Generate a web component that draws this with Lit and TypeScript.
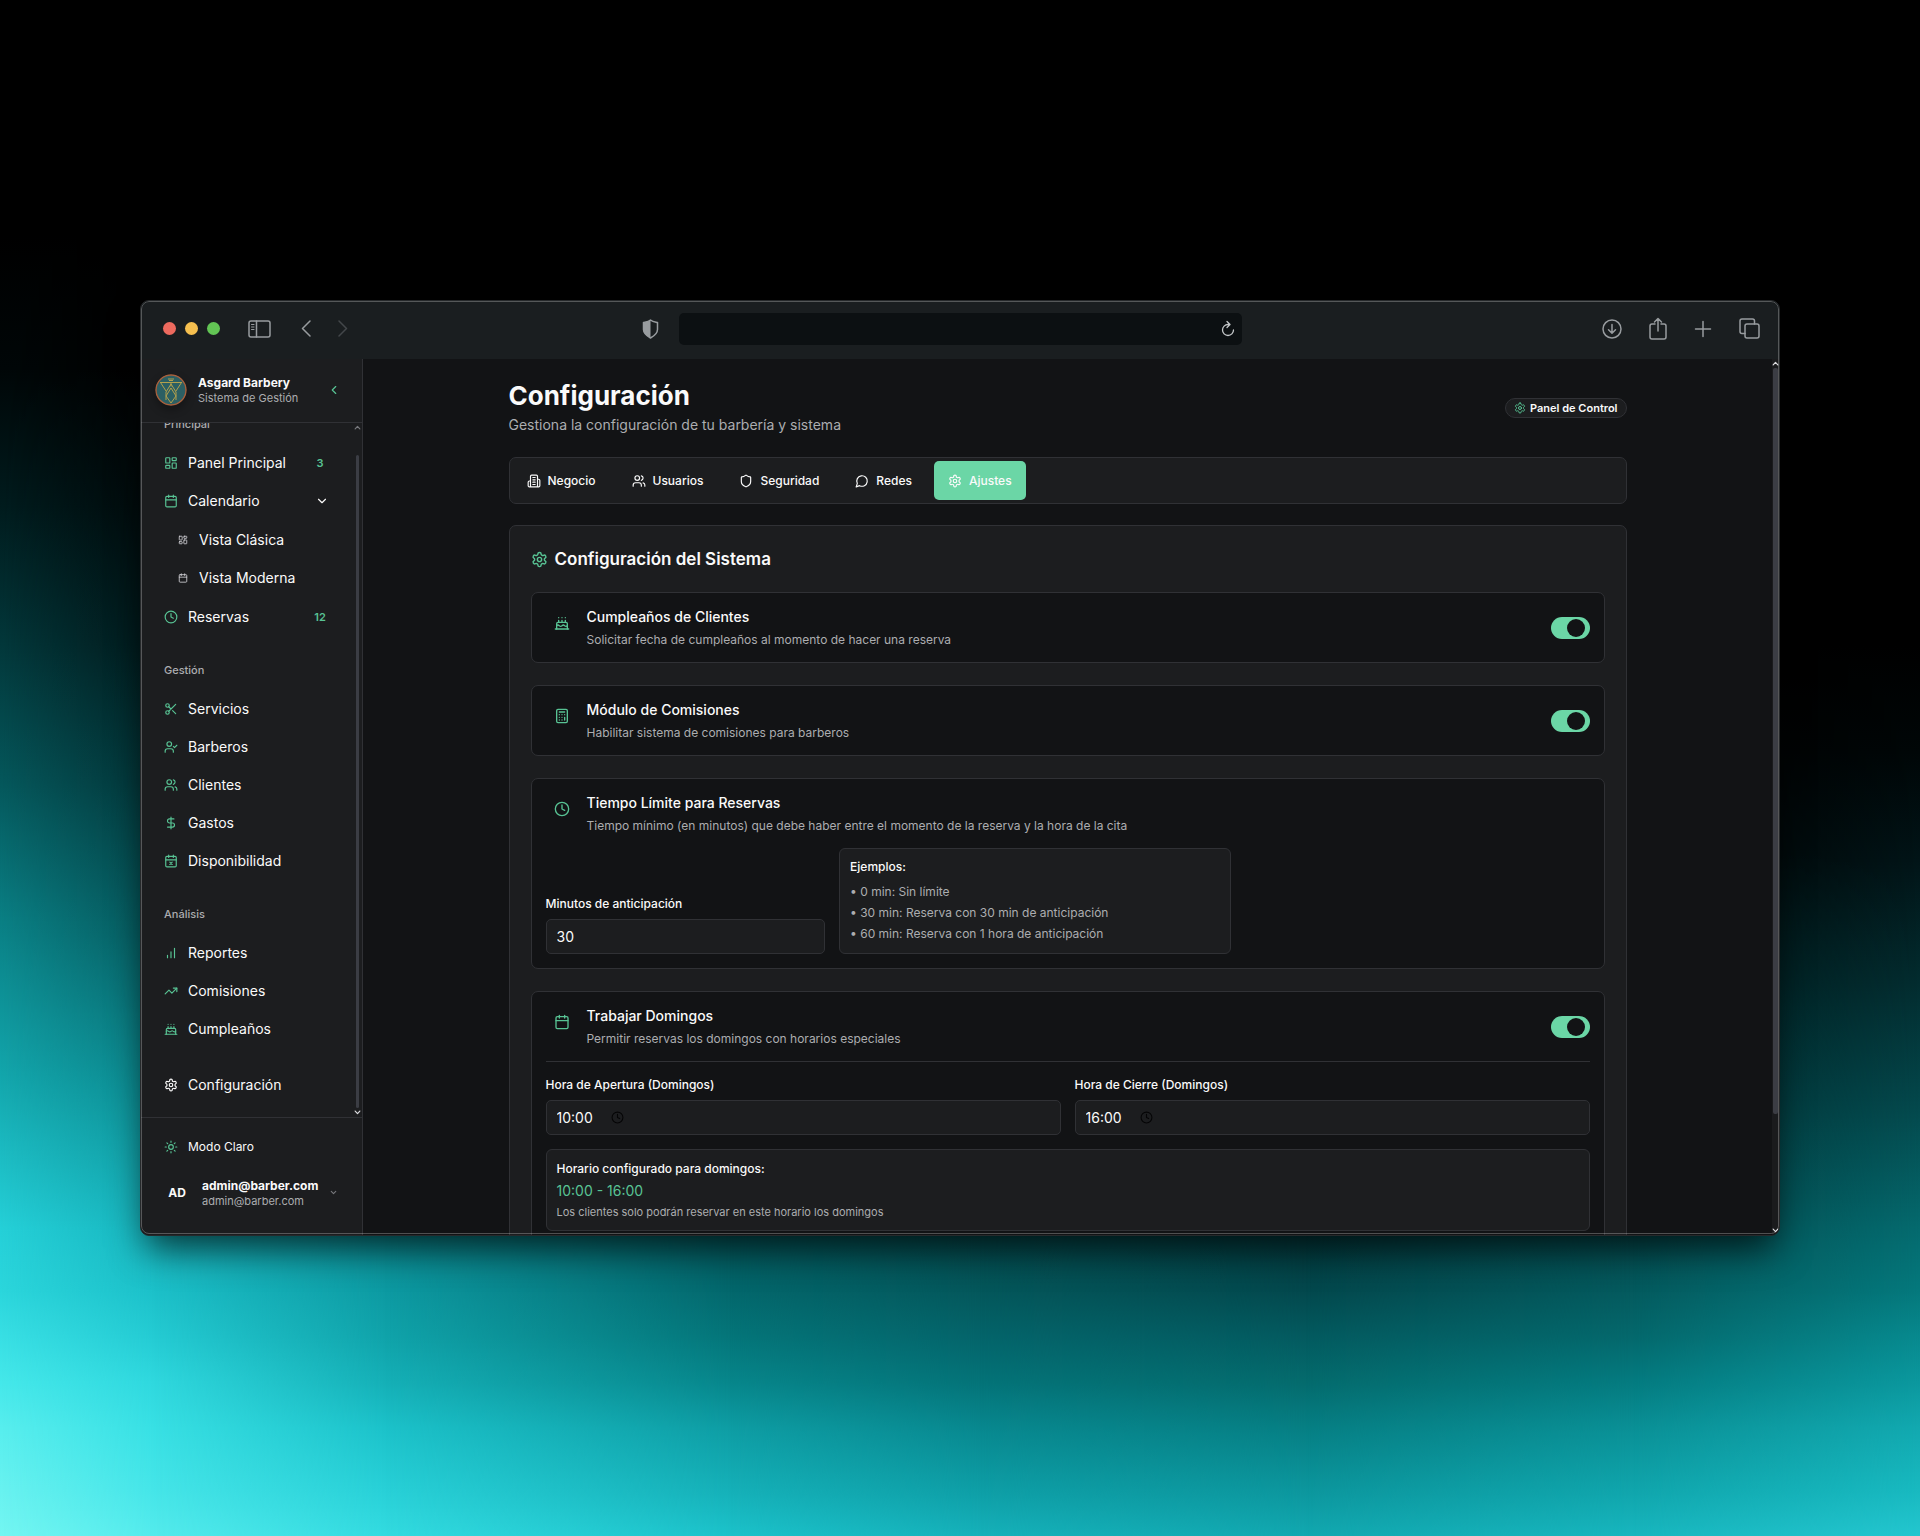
import { LitElement, html, css, svg, nothing } from "lit";
import type { TemplateResult } from "lit";
import { customElement, property, state } from "lit/decorators.js";
import { styleMap } from "lit/directives/style-map.js";
import { classMap } from "lit/directives/class-map.js";

const ICONS: Record<string, TemplateResult> = {
  dashboard: svg`<rect width="7" height="9" x="3" y="3" rx="1"/><rect width="7" height="5" x="14" y="3" rx="1"/><rect width="7" height="9" x="14" y="12" rx="1"/><rect width="7" height="5" x="3" y="16" rx="1"/>`,
  calendar: svg`<path d="M8 2v4M16 2v4"/><rect width="18" height="18" x="3" y="4" rx="2"/><path d="M3 10h18"/>`,
  calendarX: svg`<path d="M8 2v4M16 2v4"/><rect width="18" height="18" x="3" y="4" rx="2"/><path d="M3 10h18M14 14l-4 4M10 14l4 4"/>`,
  clock: svg`<circle cx="12" cy="12" r="10"/><path d="M12 6v6l4 2"/>`,
  scissors: svg`<circle cx="6" cy="6" r="3"/><path d="M8.12 8.12 12 12M20 4 8.12 15.88"/><circle cx="6" cy="18" r="3"/><path d="M14.8 14.8 20 20"/>`,
  userCheck: svg`<path d="M16 21v-2a4 4 0 0 0-4-4H6a4 4 0 0 0-4 4v2"/><circle cx="9" cy="7" r="4"/><path d="m16 11 2 2 4-4"/>`,
  users: svg`<path d="M16 21v-2a4 4 0 0 0-4-4H6a4 4 0 0 0-4 4v2"/><circle cx="9" cy="7" r="4"/><path d="M22 21v-2a4 4 0 0 0-3-3.87M16 3.13a4 4 0 0 1 0 7.75"/>`,
  dollar: svg`<path d="M12 2v20M17 5H9.5a3.5 3.5 0 0 0 0 7h5a3.5 3.5 0 0 1 0 7H6"/>`,
  bars: svg`<path d="M12 20V10M18 20V4M6 20v-4"/>`,
  trending: svg`<path d="m22 7-8.5 8.5-5-5L2 17"/><path d="M16 7h6v6"/>`,
  cake: svg`<path d="M20 21v-8a2 2 0 0 0-2-2H6a2 2 0 0 0-2 2v8"/><path d="M4 16s.5-1 2-1 2.500 2 4 2 2.500-2 4-2 2.500 2 4 2 2-1 2-1M2 21h20M7 8v3M12 8v3M17 8v3M7 4h.01M12 4h.01M17 4h.01"/>`,
  settings: svg`<path d="M12.220 2h-.44a2 2 0 0 0-2 2v.18a2 2 0 0 1-1 1.730l-.43.25a2 2 0 0 1-2 0l-.15-.08a2 2 0 0 0-2.730.73l-.22.38a2 2 0 0 0 .73 2.730l.15.1a2 2 0 0 1 1 1.720v.51a2 2 0 0 1-1 1.740l-.15.09a2 2 0 0 0-.73 2.730l.22.38a2 2 0 0 0 2.730.73l.15-.08a2 2 0 0 1 2 0l.43.25a2 2 0 0 1 1 1.730V20a2 2 0 0 0 2 2h.44a2 2 0 0 0 2-2v-.18a2 2 0 0 1 1-1.730l.43-.25a2 2 0 0 1 2 0l.15.08a2 2 0 0 0 2.730-.73l.22-.39a2 2 0 0 0-.73-2.730l-.15-.08a2 2 0 0 1-1-1.740v-.5a2 2 0 0 1 1-1.740l.15-.09a2 2 0 0 0 .73-2.730l-.22-.38a2 2 0 0 0-2.730-.73l-.15.08a2 2 0 0 1-2 0l-.43-.25a2 2 0 0 1-1-1.730V4a2 2 0 0 0-2-2z"/><circle cx="12" cy="12" r="3"/>`,
  sun: svg`<circle cx="12" cy="12" r="4"/><path d="M12 2v2M12 20v2M4.930 4.930l1.410 1.410M17.660 17.660l1.410 1.410M2 12h2M20 12h2M6.340 17.660l-1.410 1.410M19.070 4.930l-1.410 1.410"/>`,
  building: svg`<path d="M6 22V4a2 2 0 0 1 2-2h8a2 2 0 0 1 2 2v18ZM6 12H4a2 2 0 0 0-2 2v6a2 2 0 0 0 2 2h2M18 9h2a2 2 0 0 1 2 2v9a2 2 0 0 1-2 2h-2M10 6h4M10 10h4M10 14h4M10 18h4"/>`,
  shield: svg`<path d="M20 13c0 5-3.500 7.500-7.660 8.950a1 1 0 0 1-.67-.01C7.500 20.500 4 18 4 13V6a1 1 0 0 1 1-1c2 0 4.500-1.200 6.240-2.720a1.170 1.170 0 0 1 1.520 0C14.510 3.810 17 5 19 5a1 1 0 0 1 1 1z"/>`,
  message: svg`<path d="M7.900 20A9 9 0 1 0 4 16.100L2 22Z"/>`,
  calculator: svg`<rect width="16" height="20" x="4" y="2" rx="2"/><path d="M8 6h8M16 14v4M16 10h.01M12 10h.01M8 10h.01M12 14h.01M8 14h.01M12 18h.01M8 18h.01"/>`,
  chevronLeft: svg`<path d="m15 18-6-6 6-6"/>`,
  chevronDown: svg`<path d="m6 9 6 6 6-6"/>`,
  caretUp: svg`<path d="m4 17 8-9 8 9"/>`,
  caretDown: svg`<path d="m4 7 8 9 8-9"/>`,
};

@customElement("ui-icon")
class UiIcon extends LitElement {
  @property() name = "";
  static styles = css`
    :host { display: block; flex: none; width: 14px; height: 14px; }
    svg {
      display: block; width: 100%; height: 100%; fill: none;
      stroke: currentColor; stroke-width: var(--stroke, 2); stroke-linecap: round; stroke-linejoin: round;
    }
  `;
  render() {
    return html`<svg viewBox="0 0 24 24" aria-hidden="true">${ICONS[this.name]}</svg>`;
  }
}

/* Vertical colour ramps; each one fades into the next from left to right. */
const RAMPS: { from: number; to: number; stops: string }[] = [
  { from: -1, to: 0, stops: "#000 14%, #000708 24%, #011c1e 33%, #03383b 42%, #05585c 51%, #0a8085 60%, #13a6ac 70%, #25d0d8 80%, #2bd6dc 84%, #38dfe4 87%, #45e8ea 90%, #58eeee 93%, #68f2f0 97%, #74f6f2 100%" },
  { from: 0, to: 8, stops: "#000 24%, #000a0b 33%, #01191b 42%, #033538 51%, #065c60 61%, #0c8c92 71%, #17b4bd 80%, #1cc0c9 84%, #24cbd3 87%, #2fd8de 90%, #38e0e4 93%, #45e5e8 97%, #54ebec 100%" },
  { from: 8, to: 20, stops: "#000 42%, #022c2f 61%, #088087 78%, #0d9aa2 84%, #10a3aa 87%, #15b0b7 90%, #1cc2ca 93%, #28d0d7 97%, #33dbe0 100%" },
  { from: 20, to: 38, stops: "#000 55%, #034d51 78%, #03676c 84%, #047579 87%, #07868b 90%, #0e9da4 93%, #15b0b8 97%, #1cc2ca 100%" },
  { from: 38, to: 51, stops: "#000 58%, #033e41 78%, #04575b 84%, #04646a 87%, #047378 90%, #08888f 93%, #0e9ea6 97%, #16b1ba 100%" },
  { from: 51, to: 68, stops: "#000 60%, #022f32 78%, #03484d 84%, #035a5f 87%, #046b6d 90%, #067f84 93%, #0c969d 97%, #12a8b0 100%" },
  { from: 68, to: 85, stops: "#000 55%, #011f21 66%, #034044 78%, #045a5e 84%, #04686c 87%, #047b80 90%, #0a9096 93%, #10a5ac 97%, #18b6be 100%" },
  { from: 85, to: 100, stops: "#000 42%, #000607 49%, #011417 56%, #022c2f 64%, #03484c 72%, #046a6e 80%, #04787c 84%, #07898e 87%, #0b989e 90%, #12a9b0 93%, #18b9c0 97%, #24c6cf 100%" },
];

@customElement("glow-backdrop")
class GlowBackdrop extends LitElement {
  static styles = css`
    :host { position: absolute; inset: 0; background: #000; }
    .ramp { position: absolute; inset: 0; }
  `;
  render() {
    return RAMPS.map(({ from, to, stops }) => {
      const mask = from < 0 ? "none" : `linear-gradient(to right, transparent ${from}%, #000 ${to}%)`;
      return html`<div class="ramp" style=${styleMap({
        background: `linear-gradient(to bottom, ${stops})`,
        "mask-image": mask,
      })}></div>`;
    });
  }
}

@customElement("browser-bar")
class BrowserBar extends LitElement {
  static styles = css`
    :host {
      display: grid; grid-template-columns: 1fr minmax(0, 563px) 1fr; align-items: center;
      height: 58px; box-sizing: border-box; padding-bottom: 3px; background: #1a1e20; color: #989c9f; flex: none;
    }
    button { appearance: none; border: 0; background: none; padding: 0; color: inherit; display: block; }
    svg { display: block; fill: none; stroke: currentColor; stroke-width: 1.5; stroke-linecap: round; stroke-linejoin: round; }
    .side { display: flex; align-items: center; }
    .left { padding: 0 20px 0 22px; }
    .lights { display: flex; gap: 9px; margin-right: 28px; }
    .light { width: 13px; height: 13px; border-radius: 50%; }
    .close { background: #ed6a5e; }
    .min { background: #f5bf4f; }
    .max { background: #62c554; }
    .back { margin-left: 30px; }
    .forward { margin-left: 27px; color: #43474a; }
    .privacy { margin-left: auto; }
    .address { display: flex; align-items: center; height: 32px; border-radius: 5px; background: #0c1012; padding-right: 7px; color: #c4c7c9; }
    .address input { flex: 1; min-width: 0; border: 0; outline: 0; background: none; color: inherit; font: 13px Inter, sans-serif; }
    .right { justify-content: flex-end; gap: 27px; padding-right: 19px; }
  `;
  render() {
    return html`
      <div class="side left">
        <div class="lights">
          <button class="light close" aria-label="Cerrar"></button>
          <button class="light min" aria-label="Minimizar"></button>
          <button class="light max" aria-label="Maximizar"></button>
        </div>
        <button aria-label="Barra lateral">
          <svg width="23" height="18" viewBox="0 0 23 18"><rect x="1" y="1" width="21" height="16" rx="2"/><path d="M8.500 1v16"/><path stroke-width="1" d="M3.500 4.500h2.500M3.500 7h2.500M3.500 9.500h2.500"/></svg>
        </button>
        <button class="back" aria-label="Atrás">
          <svg width="10" height="17" viewBox="0 0 10 17"><path d="M9 1 1.500 8.500 9 16"/></svg>
        </button>
        <button class="forward" aria-label="Adelante">
          <svg width="10" height="17" viewBox="0 0 10 17"><path d="M1 1l7.500 7.500L1 16"/></svg>
        </button>
        <button class="privacy" aria-label="Privacidad">
          <svg width="17" height="20" viewBox="0 0 17 20"><path d="M8.500 1C6 3 3.500 3 1.500 3.500v7c0 4 3.500 6.500 7 8.500 3.500-2 7-4.500 7-8.500v-7C13.500 3 11 3 8.500 1z"/><path fill="currentColor" stroke="none" d="M8.500 1C6 3 3.500 3 1.500 3.500v7c0 4 3.500 6.500 7 8.500z"/></svg>
        </button>
      </div>
      <div class="address">
        <input type="text" aria-label="Dirección" />
        <button aria-label="Recargar">
          <svg width="14" height="17" viewBox="0 0 14 17"><path stroke-width="1.300" d="M12.500 10A5.500 5.500 0 1 1 7 4.500h1.500M6 1.500l3 3-3 3"/></svg>
        </button>
      </div>
      <div class="side right">
        <button aria-label="Descargas">
          <svg width="20" height="20" viewBox="0 0 20 20"><circle cx="10" cy="10" r="9"/><path d="M10 5.500v8.500M6.500 10.800 10 14.200l3.500-3.400"/></svg>
        </button>
        <button aria-label="Compartir">
          <svg width="18" height="23" viewBox="0 0 18 23"><path d="M6 7H3Q1 7 1 9v11q0 2 2 2h12q2 0 2-2V9q0-2-2-2h-3M9 14V1.500M5.500 5 9 1.500 12.500 5"/></svg>
        </button>
        <button aria-label="Nueva pestaña">
          <svg width="18" height="18" viewBox="0 0 18 18"><path d="M9 1.500v15M1.500 9h15"/></svg>
        </button>
        <button aria-label="Pestañas">
          <svg width="21" height="21" viewBox="0 0 21 21"><rect x="6" y="6" width="14" height="14" rx="2"/><path d="M15.500 6V3q0-2-2-2H3Q1 1 1 3v10.500q0 2 2 2h3"/></svg>
        </button>
      </div>
    `;
  }
}

interface NavItem { label: string; icon: string; badge?: string; open?: boolean; children?: NavItem[]; plain?: boolean; }
interface NavGroup { title?: string; items: NavItem[]; }

const NAV: NavGroup[] = [
  {
    title: "Principal",
    items: [
      { label: "Panel Principal", icon: "dashboard", badge: "3" },
      {
        label: "Calendario", icon: "calendar", open: true,
        children: [
          { label: "Vista Clásica", icon: "dashboard" },
          { label: "Vista Moderna", icon: "calendar" },
        ],
      },
      { label: "Reservas", icon: "clock", badge: "12" },
    ],
  },
  {
    title: "Gestión",
    items: [
      { label: "Servicios", icon: "scissors" },
      { label: "Barberos", icon: "userCheck" },
      { label: "Clientes", icon: "users" },
      { label: "Gastos", icon: "dollar" },
      { label: "Disponibilidad", icon: "calendarX" },
    ],
  },
  {
    title: "Análisis",
    items: [
      { label: "Reportes", icon: "bars" },
      { label: "Comisiones", icon: "trending" },
      { label: "Cumpleaños", icon: "cake" },
    ],
  },
  { items: [{ label: "Configuración", icon: "settings", plain: true }] },
];

@customElement("side-bar")
class SideBar extends LitElement {
  static styles = css`
    :host {
      display: flex; flex-direction: column; flex: none; width: 222px; box-sizing: border-box;
      background: #1c1d1f; border-right: 1px solid #303135; color: #fafafa;
    }
    ul { list-style: none; margin: 0; padding: 0; }
    a { color: inherit; text-decoration: none; }
    button { appearance: none; border: 0; background: none; padding: 0; color: inherit; font: inherit; text-align: left; }
    .brand {
      display: flex; align-items: center; gap: 11px; height: 64px; padding: 0 21px 1px 14px; box-sizing: border-box;
      border-bottom: 1px solid #303135; flex: none;
    }
    .logo { width: 32px; height: 32px; border-radius: 50%; box-shadow: 0 4px 8px rgba(0, 0, 0, 0.3); }
    .who { flex: 1; min-width: 0; }
    .name { font-size: 12px; font-weight: 700; line-height: 16px; }
    .sub { font-size: 11px; line-height: 14px; color: #acadb0; }
    .collapse { color: #58c394; }
    .body { flex: 1; min-height: 0; display: flex; }
    nav { flex: 1; min-width: 0; overflow-y: auto; scrollbar-width: none; padding: 12px 0 13px; display: flex; flex-direction: column; gap: 24px; box-sizing: border-box; }
    .group:last-child { margin-top: -6px; }
    .title { margin: 0 0 10px; padding-left: 23px; font-size: 11px; line-height: 20px; font-weight: 500; color: #acadb0; }
    .item { display: flex; align-items: center; width: 100%; height: 38px; box-sizing: border-box; padding: 0 24px 0 23px; gap: 10px; font-size: 14px; line-height: 20px; }
    .item ui-icon { color: #58c394; }
    .item.plain ui-icon { color: #fafafa; }
    .label { flex: 1; }
    .badge { width: 18px; text-align: center; font-size: 11px; font-weight: 600; color: #58c394; }
    .item .caret { color: #fafafa; }
    .children { padding: 1px 0; }
    .children .item { padding-left: 37px; gap: 11px; }
    .children .item ui-icon { width: 10px; height: 10px; color: #d4d4d8; }
    .rail { width: 9px; display: flex; flex-direction: column; align-items: center; flex: none; color: #dcdcdf; --stroke: 4; }
    .rail ui-icon { width: 7px; height: 9px; }
    .rail .dim { color: #77787c; }
    .thumb { width: 3px; border-radius: 2px; background: #3b3d44; flex: 1; margin-top: 23px; }
    .foot { border-top: 1px solid #303135; padding: 10px 0; flex: none; height: 118px; box-sizing: border-box; }
    .foot .item { font-size: 12px; }
    .account { display: flex; align-items: center; width: 100%; height: 53px; padding: 0 24px 0 22px; }
    .initials { width: 28px; text-align: center; font-size: 12px; font-weight: 700; margin-right: 11px; }
    .mail { flex: 1; }
    .account ui-icon { width: 9px; height: 9px; color: #77787c; --stroke: 3; }
  `;
  firstUpdated() {
    const nav = this.renderRoot.querySelector("nav")!;
    nav.scrollTop = nav.scrollHeight;
  }
  private item(i: NavItem): TemplateResult {
    const cls = classMap({ item: true, plain: !!i.plain });
    if (i.children) {
      return html`<li>
        <button class=${cls} aria-expanded=${String(!!i.open)}>
          <ui-icon name=${i.icon}></ui-icon><span class="label">${i.label}</span><ui-icon class="caret" name="chevronDown"></ui-icon>
        </button>
        <ul class="children">${i.children.map((c) => this.item(c))}</ul>
      </li>`;
    }
    return html`<li><a class=${cls} href="#"><ui-icon name=${i.icon}></ui-icon><span class="label">${i.label}</span>${i.badge ? html`<span class="badge">${i.badge}</span>` : nothing}</a></li>`;
  }
  render() {
    return html`
      <header class="brand">
        <svg class="logo" viewBox="0 0 32 32" aria-hidden="true">
          <circle cx="16" cy="16" r="15" fill="#2c5f63" stroke="#a9603c" stroke-width="1.400"/>
          <g fill="none" stroke="#b3a04c" stroke-width="1" stroke-linejoin="round">
            <path d="M5 8.500h22M13 5h6M14 6.500h4M16 8.500v4M5.500 8.500 11 17M26.500 8.500 21 17M16 10l-5 8v8M16 10l5 8v8M16 14l-5 8 5 7 5-7-5-8"/>
          </g>
        </svg>
        <div class="who"><div class="name">Asgard Barbery</div><div class="sub">Sistema de Gestión</div></div>
        <button class="collapse" aria-label="Contraer menú"><ui-icon name="chevronLeft"></ui-icon></button>
      </header>
      <div class="body">
        <nav>
          ${NAV.map((g) => html`<section class="group">
            ${g.title ? html`<h2 class="title">${g.title}</h2>` : nothing}
            <ul>${g.items.map((i) => this.item(i))}</ul>
          </section>`)}
        </nav>
        <div class="rail" aria-hidden="true">
          <ui-icon class="dim" name="caretUp"></ui-icon><div class="thumb"></div><ui-icon name="caretDown"></ui-icon>
        </div>
      </div>
      <footer class="foot">
        <button class="item"><ui-icon name="sun"></ui-icon><span class="label">Modo Claro</span></button>
        <button class="account">
          <span class="initials">AD</span>
          <span class="mail"><div class="name">admin@barber.com</div><div class="sub">admin@barber.com</div></span>
          <ui-icon name="chevronDown"></ui-icon>
        </button>
      </footer>
    `;
  }
}

const TABS = [
  { label: "Negocio", icon: "building" },
  { label: "Usuarios", icon: "users" },
  { label: "Seguridad", icon: "shield" },
  { label: "Redes", icon: "message" },
  { label: "Ajustes", icon: "settings" },
];

@customElement("settings-page")
class SettingsPage extends LitElement {
  @state() private active = "Ajustes";
  static styles = css`
    :host { display: flex; flex: 1; min-width: 0; background: #121315; color: #fafafa; }
    h1, h2, h3, p, ul { margin: 0; padding: 0; }
    ul { list-style: none; }
    .scroll { flex: 1; min-width: 0; overflow-y: auto; scrollbar-width: none; }
    .page { max-width: 1118px; margin: 0 auto; padding: 20px 0; }
    .head { display: flex; align-items: center; justify-content: space-between; margin-bottom: 21px; }
    h1 { font-size: 26px; line-height: 33px; font-weight: 700; }
    .lead { margin-top: 2px; font-size: 14px; line-height: 22px; color: #acadb0; }
    .pill { display: flex; align-items: center; gap: 4px; height: 20px; box-sizing: border-box; padding: 0 8px; border: 1px solid #303135; border-radius: 10px; background: #1c1d1f; font-size: 11px; font-weight: 600; }
    .pill ui-icon { width: 12px; height: 12px; }
    ui-icon { color: #58c394; }
    .tabs { display: flex; gap: 8px; padding: 3px; border: 1px solid #303135; border-radius: 7px; background: #1c1d1f; margin-bottom: 21px; }
    .tab { appearance: none; border: 0; background: none; color: inherit; font: 500 12px/18px Inter, sans-serif; display: flex; align-items: center; gap: 7px; height: 39px; padding: 0 14px; border-radius: 5px; }
    .tab ui-icon { color: inherit; }
    .tab.on { background: #6bd6a6; }
    .panel { border: 1px solid #303135; border-radius: 7px; background: #1c1d1f; padding: 22px 21px; display: grid; gap: 22px; }
    h2 { display: flex; align-items: center; gap: 7px; font-size: 17px; line-height: 22px; font-weight: 600; }
    h2 ui-icon { width: 17px; height: 17px; }
    .card { border: 1px solid #303135; border-radius: 7px; background: #121315; padding: 14px; display: grid; gap: 14px; }
    .row { display: flex; align-items: center; gap: 9px; }
    .mark { width: 32px; height: 32px; display: grid; place-items: center; align-self: flex-start; }
    .mark ui-icon { width: 16px; height: 16px; }
    .text { flex: 1; }
    h3 { font-size: 14px; line-height: 20px; font-weight: 500; }
    .desc { margin-top: 4px; font-size: 12px; line-height: 17px; color: #acadb0; }
    .switch { appearance: none; margin: 0; width: 39px; height: 22px; border-radius: 11px; background: #3b3d44; display: flex; align-items: center; padding: 0 5px 0 2px; box-sizing: border-box; }
    .switch::before { content: ""; width: 18px; height: 18px; border-radius: 50%; background: #121315; }
    .switch:checked { background: #6bd6a6; justify-content: flex-end; }
    .split { display: grid; grid-template-columns: 5fr 7fr; gap: 14px; max-width: 685px; align-items: end; }
    .pair { display: grid; grid-template-columns: 1fr 1fr; gap: 14px; border-top: 1px solid #303135; padding-top: 14px; }
    .field { display: grid; gap: 6px; }
    label, .strong { font-size: 12px; line-height: 18px; font-weight: 500; }
    .box { display: flex; align-items: center; height: 35px; box-sizing: border-box; border: 1px solid #303135; border-radius: 5px; background: #1c1d1f; padding: 0 10px; gap: 15px; }
    .box input { appearance: none; width: 100%; border: 0; outline: 0; padding: 0; background: none; color: inherit; font: 14px/20px Inter, sans-serif; }
    .box .time { width: 39px; }
    .box ui-icon { width: 13px; height: 13px; color: #050506; }
    .note { border: 1px solid #303135; border-radius: 6px; background: #1c1d1f; padding: 9px 10px; }
    .note ul { margin-top: 5px; font-size: 12px; line-height: 21px; color: #acadb0; }
    .note.hours { padding: 10px; display: grid; gap: 3px; }
    .range { font-size: 14px; line-height: 20px; color: #58c394; }
    .small { font-size: 11px; line-height: 16px; color: #acadb0; }
    .rail { width: 7px; flex: none; display: flex; flex-direction: column; align-items: center; background: #1a1b1d; color: #dcdcdf; --stroke: 4; }
    .rail ui-icon { width: 7px; height: 9px; color: inherit; }
    .thumb { width: 5px; flex: 745; background: #3b3d44; border-radius: 2px; }
    .rest { flex: 112; }
  `;
  private intro(id: string, icon: string, title: string, desc: string, toggle = true) {
    return html`<div class="row">
      <div class="mark"><ui-icon name=${icon}></ui-icon></div>
      <div class="text"><h3 id=${id}>${title}</h3><p class="desc">${desc}</p></div>
      ${toggle ? html`<input class="switch" type="checkbox" role="switch" aria-labelledby=${id} checked />` : nothing}
    </div>`;
  }
  render() {
    return html`
      <div class="scroll"><main class="page">
        <header class="head">
          <div><h1>Configuración</h1><p class="lead">Gestiona la configuración de tu barbería y sistema</p></div>
          <div class="pill"><ui-icon name="settings"></ui-icon>Panel de Control</div>
        </header>
        <div class="tabs" role="tablist">
          ${TABS.map((t) => html`<button role="tab" aria-selected=${String(t.label === this.active)}
            class=${classMap({ tab: true, on: t.label === this.active })} @click=${() => (this.active = t.label)}>
            <ui-icon name=${t.icon}></ui-icon>${t.label}</button>`)}
        </div>
        <section class="panel">
          <h2><ui-icon name="settings"></ui-icon>Configuración del Sistema</h2>
          <div class="card">${this.intro("cumple", "cake", "Cumpleaños de Clientes", "Solicitar fecha de cumpleaños al momento de hacer una reserva")}</div>
          <div class="card">${this.intro("comis", "calculator", "Módulo de Comisiones", "Habilitar sistema de comisiones para barberos")}</div>
          <div class="card">
            ${this.intro("limite", "clock", "Tiempo Límite para Reservas", "Tiempo mínimo (en minutos) que debe haber entre el momento de la reserva y la hora de la cita", false)}
            <div class="split">
              <div class="field"><label for="minutos">Minutos de anticipación</label><div class="box"><input id="minutos" type="text" inputmode="numeric" value="30" /></div></div>
              <div class="note">
                <p class="strong">Ejemplos:</p>
                <ul><li>• 0 min: Sin límite</li><li>• 30 min: Reserva con 30 min de anticipación</li><li>• 60 min: Reserva con 1 hora de anticipación</li></ul>
              </div>
            </div>
          </div>
          <div class="card">
            ${this.intro("domingos", "calendar", "Trabajar Domingos", "Permitir reservas los domingos con horarios especiales")}
            <div class="pair">
              <div class="field"><label for="abre">Hora de Apertura (Domingos)</label><div class="box"><input class="time" id="abre" type="text" value="10:00" /><ui-icon name="clock"></ui-icon></div></div>
              <div class="field"><label for="cierra">Hora de Cierre (Domingos)</label><div class="box"><input class="time" id="cierra" type="text" value="16:00" /><ui-icon name="clock"></ui-icon></div></div>
            </div>
            <div class="note hours">
              <p class="strong">Horario configurado para domingos:</p>
              <p class="range">10:00 - 16:00</p>
              <p class="small">Los clientes solo podrán reservar en este horario los domingos</p>
            </div>
          </div>
        </section>
      </main></div>
      <div class="rail" aria-hidden="true"><ui-icon name="caretUp"></ui-icon><div class="thumb"></div><div class="rest"></div><ui-icon name="caretDown"></ui-icon></div>
    `;
  }
}

@customElement("app-root")
class AppRoot extends LitElement {
  static styles = css`
    :host { display: block; font-family: Inter, "Liberation Sans", sans-serif; }
    .stage { position: relative; display: flex; height: 100vh; box-sizing: border-box; padding: 300px 140px; }
    .window {
      position: relative; flex: 1; min-width: 0; display: flex; flex-direction: column; overflow: hidden;
      border: 1px solid #26292b; border-radius: 9px; background: #121315;
      box-shadow: 0 18px 36px -6px rgba(0, 0, 0, 0.7);
    }
    .window::after {
      content: ""; position: absolute; inset: 0 0 1px; border: 1px solid rgba(255, 255, 255, 0.26);
      border-radius: 8px; pointer-events: none;
    }
    .content { flex: 1; min-height: 0; display: flex; }
  `;
  render() {
    return html`
      <div class="stage">
        <glow-backdrop></glow-backdrop>
        <div class="window">
          <browser-bar></browser-bar>
          <div class="content"><side-bar></side-bar><settings-page></settings-page></div>
        </div>
      </div>
    `;
  }
}
